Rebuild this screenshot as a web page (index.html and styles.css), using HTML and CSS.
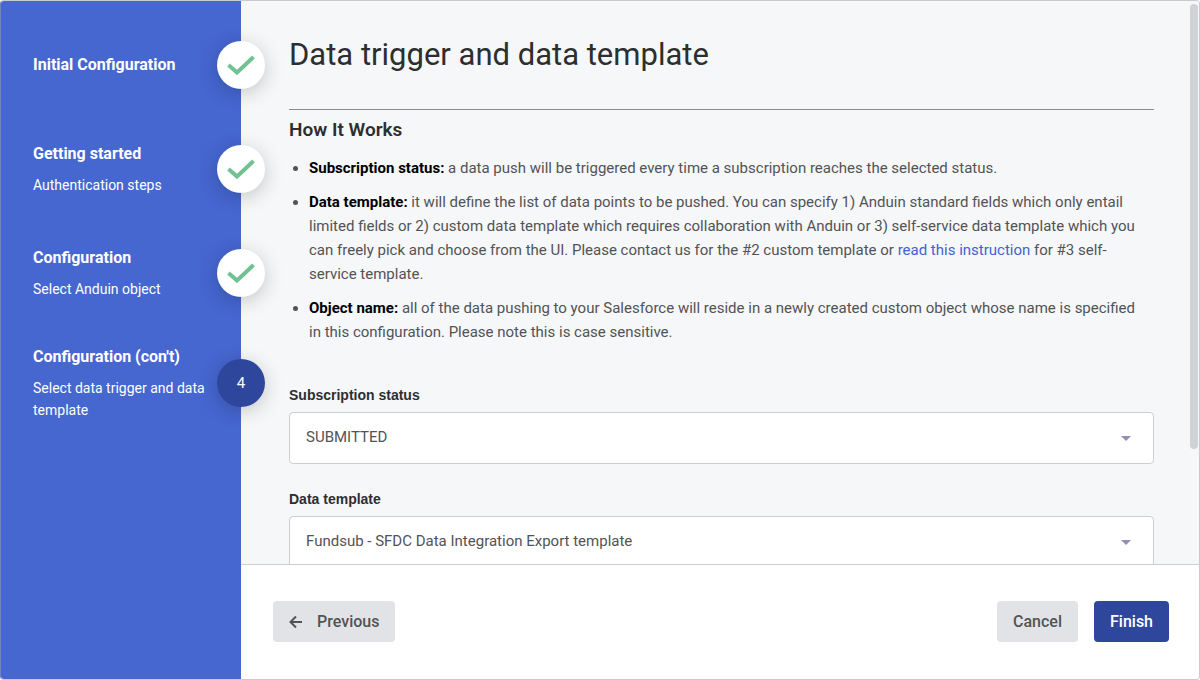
FILE: index.html
```
<!doctype html>
<html lang="en">
<head>
	<meta charset="UTF-8">
	<meta name="viewport" content="width=device-width, initial-scale=1">
	<title>Data trigger and data template</title>
	<link rel="stylesheet" href="styles.css">
</head>
<body>
	<div class="wizard">
		<nav class="sidebar" aria-label="Steps">
			<ol class="steps">
				<li class="step">
					<div class="step-text">
						<h4>Initial Configuration</h4>
					</div>
					<span class="step-mark">
						<svg width="28" height="22" viewBox="0 0 28 22"><path d="M1.5 11 L10 18.5 L26.5 3"/></svg>
					</span>
				</li>
				<li class="step">
					<div class="step-text">
						<h4>Getting started</h4>
						<p>Authentication steps</p>
					</div>
					<span class="step-mark">
						<svg width="28" height="22" viewBox="0 0 28 22"><path d="M1.5 11 L10 18.5 L26.5 3"/></svg>
					</span>
				</li>
				<li class="step">
					<div class="step-text">
						<h4>Configuration</h4>
						<p>Select Anduin object</p>
					</div>
					<span class="step-mark">
						<svg width="28" height="22" viewBox="0 0 28 22"><path d="M1.5 11 L10 18.5 L26.5 3"/></svg>
					</span>
				</li>
				<li class="step">
					<div class="step-text">
						<h4>Configuration (con't)</h4>
						<p>Select data trigger and data template</p>
					</div>
					<span class="step-mark current">4</span>
				</li>
			</ol>
		</nav>
		<div class="main">
			<main class="content">
				<h1>Data trigger and data template</h1>
				<hr>
				<h2>How It Works</h2>
				<ul class="notes">
					<li><b>Subscription status:</b> a data push will be triggered every time a subscription reaches the selected status.</li>
					<li><b>Data template:</b> it will define the list of data points to be pushed. You can specify 1) Anduin standard fields which only entail limited fields or 2) custom data template which requires collaboration with Anduin or 3) self-service data template which you can freely pick and choose from the UI. Please contact us for the #2 custom template or <a href="#">read this instruction</a> for #3 self-service template.</li>
					<li><b>Object name:</b> all of the data pushing to your Salesforce will reside in a newly created custom object whose name is specified in this configuration. Please note this is case sensitive.</li>
				</ul>
				<div class="field">
					<label for="status">Subscription status</label>
					<div class="select">
						<select id="status">
							<option>SUBMITTED</option>
						</select>
						<svg width="10" height="5" viewBox="0 0 10 5"><path d="M0 0H10L5 5Z"/></svg>
					</div>
				</div>
				<div class="field">
					<label for="template">Data template</label>
					<div class="select">
						<select id="template">
							<option>Fundsub - SFDC Data Integration Export template</option>
						</select>
						<svg width="10" height="5" viewBox="0 0 10 5"><path d="M0 0H10L5 5Z"/></svg>
					</div>
				</div>
			</main>
			<div class="scroll-thumb"></div>
			<footer class="actions">
				<button type="button" class="btn btn-prev">
					<svg width="14" height="14" viewBox="0 0 14 14"><path d="M13 7H2M7 1.5L1.5 7L7 12.5"/></svg>
					Previous
				</button>
				<button type="button" class="btn">Cancel</button>
				<button type="button" class="btn btn-primary">Finish</button>
			</footer>
		</div>
	</div>
</body>
</html>
```
FILE: styles.css
```
*{
	box-sizing: border-box;
}
html,
body{
	height: 100%;
}
body{
	margin: 0;
	overflow: hidden;
	background: #fff;
	color: #525355;
	font: 15px/24px Roboto, "Liberation Sans", sans-serif;
}
h1, h2, h4, p, ul, ol{
	margin: 0;
	padding: 0;
}
.wizard{
	display: flex;
	height: 100%;
	border: 1px solid #c9cacd;
	border-left-color: #7582bd;
	border-radius: 4px;
	overflow: hidden;
}

/* sidebar */
.sidebar{
	flex: none;
	position: relative;
	z-index: 1;
	width: 240px;
	padding: 32px 0 0 32px;
	background: #4666d0;
	color: #fff;
}
.steps{
	display: flex;
	flex-direction: column;
	gap: 40px;
	margin-right: -24px;
	list-style: none;
}
.step{
	display: flex;
	align-items: center;
	min-height: 64px;
}
.step-text{
	flex: 1;
	display: flex;
	flex-direction: column;
	gap: 8px;
	min-width: 0;
}
.step h4{
	font-size: 16px;
	line-height: 24px;
	font-weight: 700;
}
.step p{
	font-size: 14px;
	line-height: 22px;
}
.step-mark{
	flex: none;
	display: flex;
	align-items: center;
	justify-content: center;
	width: 48px;
	height: 48px;
	border-radius: 50%;
	background: #fff;
	box-shadow: 0 4px 20px rgba(0,0,0,.2);
}
.step-mark path{
	fill: none;
	stroke: #72c193;
	stroke-width: 4;
}
.step-mark.current{
	background: #2e479c;
}

/* main column */
.main{
	flex: 1;
	display: flex;
	flex-direction: column;
	position: relative;
	min-width: 0;
}
.content{
	flex: 1;
	min-height: 0;
	padding: 32px 45px 0 48px;
	overflow: hidden;
	background: #f6f7f9;
}
h1{
	color: #2d2e2f;
	font-size: 31px;
	line-height: 44px;
	font-weight: 400;
}
hr{
	height: 1px;
	margin: 32px 0 8px;
	border: 0;
	background: #8b8c90;
}
h2{
	color: #2d2e2f;
	font-size: 19px;
	line-height: 24px;
	font-weight: 600;
}
.notes{
	display: flex;
	flex-direction: column;
	gap: 10px;
	margin: 14px 0 40px;
	padding: 0 8px 0 20px;
}
.notes b{
	color: #000;
	font-weight: 700;
}
.notes a{
	color: #4462cf;
	text-decoration: none;
}
.field{
	margin-bottom: 24px;
}
.field label{
	display: block;
	margin-bottom: 6px;
	color: #2d2e2f;
	font: bold 14px/22px "Liberation Sans", Arial, sans-serif;
}
.select{
	position: relative;
}
.select select{
	display: block;
	width: 100%;
	height: 52px;
	padding: 0 48px 2px 16px;
	border: 1px solid #cdced2;
	border-radius: 4px;
	background: #fff;
	color: #525355;
	font: inherit;
	appearance: none;
}
.select svg{
	position: absolute;
	top: 24px;
	right: 23px;
	fill: #928fb4;
	pointer-events: none;
}
.scroll-thumb{
	position: absolute;
	top: 3px;
	right: 1px;
	width: 8px;
	height: 445px;
	border-radius: 4px;
	background: #cfd3d6;
}

/* footer */
.actions{
	flex: none;
	display: flex;
	gap: 16px;
	padding: 36px 30px 37px 32px;
	border-top: 1px solid #cdced2;
	background: #fff;
}
.btn{
	display: flex;
	align-items: center;
	height: 41px;
	padding: 0 16px;
	border: 0;
	border-radius: 4px;
	background: #e2e3e6;
	color: #525355;
	font: 500 16px/24px Roboto, "Liberation Sans", sans-serif;
	cursor: pointer;
}
.btn-prev{
	gap: 14px;
	margin-right: auto;
}
.btn-prev path{
	fill: none;
	stroke: #525355;
	stroke-width: 2;
}
.btn-primary{
	background: #2e479c;
	color: #fff;
}
```
